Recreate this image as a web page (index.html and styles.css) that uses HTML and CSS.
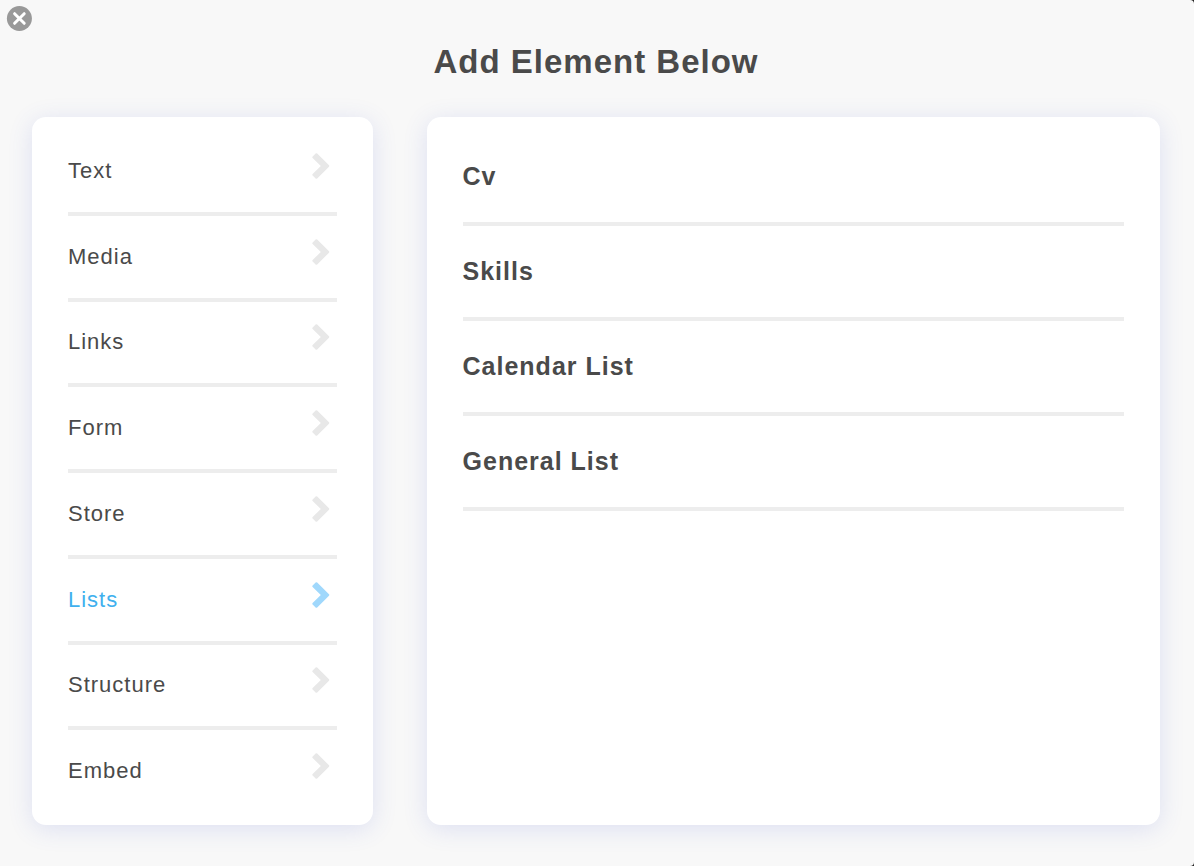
FILE: index.html
```html
<!DOCTYPE html>
<html lang="en">
<head>
    <meta charset="UTF-8">
    <meta name="viewport" content="width=device-width, initial-scale=1.0">
    <title>Add Element Below</title>
    <link rel="stylesheet" href="styles.css">
</head>
<body>
    <svg class="sprite" aria-hidden="true">
        <symbol id="chevron" viewBox="0 0 18 26">
            <path d="M5.2 0.5 L17 12.3 Q17.6 13 17 13.7 L5.2 25.5 Q4.4 26.2 3.6 25.5 L0.6 22.6 Q0 21.8 0.6 21 L8.8 13 L0.6 5 Q0 4.2 0.6 3.4 L3.6 0.5 Q4.4 -0.2 5.2 0.5 Z" fill="currentColor"/>
        </symbol>
    </svg>
    <main class="modal">
        <button class="close-button" type="button" aria-label="Close">
            <svg viewBox="0 0 26 26" aria-hidden="true">
                <circle cx="13.4" cy="12.5" r="12.5" fill="#999"/>
                <path d="M8.6 7.7 L18.2 17.3 M18.2 7.7 L8.6 17.3" fill="none" stroke="#fff" stroke-width="3" stroke-linecap="round"/>
            </svg>
        </button>
        <h1>Add Element Below</h1>
        <div class="columns">
            <nav class="card categories">
                <a href="#text">Text <svg class="chevron"><use href="#chevron"/></svg></a>
                <a href="#media">Media <svg class="chevron"><use href="#chevron"/></svg></a>
                <a href="#links">Links <svg class="chevron"><use href="#chevron"/></svg></a>
                <a href="#form">Form <svg class="chevron"><use href="#chevron"/></svg></a>
                <a href="#store">Store <svg class="chevron"><use href="#chevron"/></svg></a>
                <a href="#lists" class="active">Lists <svg class="chevron"><use href="#chevron"/></svg></a>
                <a href="#structure">Structure <svg class="chevron"><use href="#chevron"/></svg></a>
                <a href="#embed">Embed <svg class="chevron"><use href="#chevron"/></svg></a>
            </nav>
            <section class="card elements">
                <button type="button">Cv</button>
                <button type="button">Skills</button>
                <button type="button">Calendar List</button>
                <button type="button">General List</button>
            </section>
        </div>
    </main>
</body>
</html>
```
FILE: styles.css
```css
* {
    box-sizing: border-box;
}
html {
    background-color: #222;
}
body {
    margin: 0;
    color: #4a4a4a;
    font-family: "Liberation Sans", Arial, sans-serif;
    letter-spacing: 1px;
}
.sprite {
    display: none;
}
.modal {
    position: relative;
    display: flex;
    flex-direction: column;
    min-height: 100vh;
    padding: 42px 34px 41px 32px;
    background-color: #f8f8f8;
    border-radius: 0 4px 4px 0;
}
h1 {
    margin: 0 0 35px;
    font-size: 33px;
    line-height: 40px;
    text-align: center;
}
button {
    padding: 0;
    border: none;
    background: none;
    color: inherit;
    font: inherit;
    letter-spacing: inherit;
    cursor: pointer;
}
.close-button {
    position: absolute;
    top: 6px;
    left: 6px;
    width: 26px;
    height: 26px;
}
.close-button svg {
    display: block;
}

/* Two cards: categories on the left, their elements on the right */
.columns {
    flex: 1;
    display: grid;
    grid-template-columns: 13fr 28fr;
    gap: 54px;
}
.card {
    display: flex;
    flex-direction: column;
    padding: 13px 36px 9px;
    background-color: #fff;
    border-radius: 14px;
    box-shadow: 0 4px 24px rgba(70, 90, 210, 0.15);
}
.categories a {
    flex: 1;
    display: flex;
    align-items: center;
    justify-content: space-between;
    min-height: 60px;
    padding-right: 7px;
    border-bottom: 4px solid #ededed;
    color: inherit;
    font-size: 22px;
    text-decoration: none;
}
.categories a:last-child {
    border-bottom-color: transparent;
}
.chevron {
    width: 18px;
    height: 26px;
    margin-bottom: 10px;
    color: #e8e8e8;
}
.categories .active {
    color: #40b0ee;
}
.active .chevron {
    color: #a0d8fc;
}
.card.elements {
    padding-top: 14px;
}
.elements button {
    height: 95px;
    border-bottom: 4px solid #ededed;
    font-size: 25px;
    font-weight: bold;
    text-align: left;
}
```
